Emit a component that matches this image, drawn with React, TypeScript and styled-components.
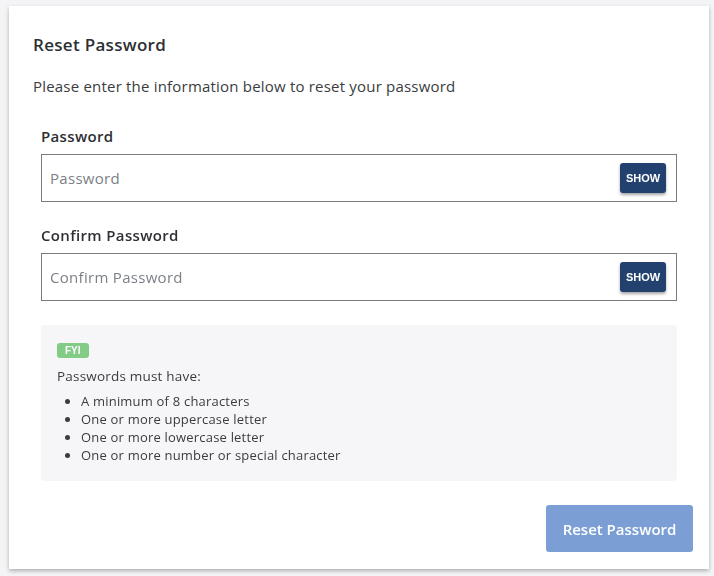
import React, { useState } from 'react'
import styled, { createGlobalStyle } from 'styled-components'

const GlobalStyle = createGlobalStyle`
  body {
    margin: 0;
    background: #f4f4f6;
    font-family: "Open Sans", "Liberation Sans", sans-serif;
    color: #333;
  }
`

const Page = styled.div`
  padding: 6px 5px 7px 9px;
`

const Card = styled.div`
  background: #fff;
  width: 700px;
  min-height: 563px;
  box-sizing: border-box;
  box-shadow: 0 2px 4px rgba(0, 0, 0, 0.28);
  padding: 29px 16px 17px 24px;
  display: flex;
  flex-direction: column;
`

const Title = styled.h2`
  margin: 0;
  font-size: 17px;
  line-height: 20px;
  font-weight: 600;
  letter-spacing: 0.3px;
  color: #2d2f33;
`

const Intro = styled.p`
  margin: 21px 0 0;
  font-size: 15px;
  line-height: 20px;
  letter-spacing: 0.2px;
  color: #3a3c40;
`

const Form = styled.div`
  padding: 0 16px 0 8px;
  margin-top: 30px;
  display: flex;
  flex-direction: column;
`

const Field = styled.div<{ $first?: boolean }>`
  margin-top: ${p => (p.$first ? '0' : '23px')};
`

const Label = styled.label`
  display: block;
  font-size: 15px;
  line-height: 20px;
  font-weight: 600;
  letter-spacing: 0.35px;
  color: #2d2f33;
  margin-bottom: 8px;
`

const InputBox = styled.div`
  height: 48px;
  box-sizing: border-box;
  border: 1px solid #7b7b7b;
  display: flex;
  align-items: center;
  padding: 0 10px 0 8px;
`

const Input = styled.input`
  flex: 1;
  border: none;
  outline: none;
  font-family: inherit;
  font-size: 15px;
  letter-spacing: 0.3px;
  color: #333;
  padding: 0;
  background: transparent;

  &::placeholder {
    color: #7c8087;
  }
`

const ShowButton = styled.button`
  background: #22416e;
  color: #fff;
  border: none;
  border-radius: 3px;
  width: 46px;
  height: 30px;
  padding: 0;
  font-family: "Liberation Sans", sans-serif;
  font-size: 11px;
  font-weight: 700;
  box-shadow: 0 2px 3px rgba(0, 0, 0, 0.35);
  cursor: pointer;
`

const InfoBox = styled.div`
  margin-top: 24px;
  background: #f6f6f8;
  border-radius: 4px;
  padding: 18px 16px 16px;
  height: 156px;
  box-sizing: border-box;
`

const Badge = styled.span`
  display: block;
  width: fit-content;
  background: #82cc86;
  color: #fff;
  font-family: "Liberation Sans", sans-serif;
  font-size: 10px;
  font-weight: 700;
  line-height: 15px;
  padding: 0 8px;
  border-radius: 3px;
`

const InfoText = styled.p`
  margin: 9px 0 0;
  font-size: 13.5px;
  line-height: 18px;
  letter-spacing: 0.2px;
  color: #3a3c40;
`

const Rules = styled.ul`
  margin: 7px 0 0;
  padding-left: 24px;
  font-size: 13px;
  line-height: 18px;
  letter-spacing: 0.2px;
  color: #3a3c40;
`

const Footer = styled.div`
  margin-top: auto;
  display: flex;
  justify-content: flex-end;
`

const SubmitButton = styled.button`
  background: #7b9fd4;
  color: #fff;
  border: none;
  border-radius: 3px;
  width: 147px;
  height: 47px;
  font-family: inherit;
  font-size: 15px;
  font-weight: 600;
`

const rules = [
  'A minimum of 8 characters',
  'One or more uppercase letter',
  'One or more lowercase letter',
  'One or more number or special character',
]

function PasswordField({ label, first }: { label: string; first?: boolean }) {
  const [visible, setVisible] = useState(false)
  return (
    <Field $first={first}>
      <Label>{label}</Label>
      <InputBox>
        <Input type={visible ? 'text' : 'password'} placeholder={label} autoFocus={first} />
        <ShowButton type="button" onClick={() => setVisible(v => !v)}>
          {visible ? 'HIDE' : 'SHOW'}
        </ShowButton>
      </InputBox>
    </Field>
  )
}

export default function App() {
  return (
    <>
      <GlobalStyle />
      <Page>
        <Card>
          <Title>Reset Password</Title>
          <Intro>Please enter the information below to reset your password</Intro>
          <Form>
            <PasswordField label="Password" first />
            <PasswordField label="Confirm Password" />
            <InfoBox>
              <Badge>FYI</Badge>
              <InfoText>Passwords must have:</InfoText>
              <Rules>
                {rules.map(r => (
                  <li key={r}>{r}</li>
                ))}
              </Rules>
            </InfoBox>
          </Form>
          <Footer>
            <SubmitButton type="button" disabled>
              Reset Password
            </SubmitButton>
          </Footer>
        </Card>
      </Page>
    </>
  )
}
